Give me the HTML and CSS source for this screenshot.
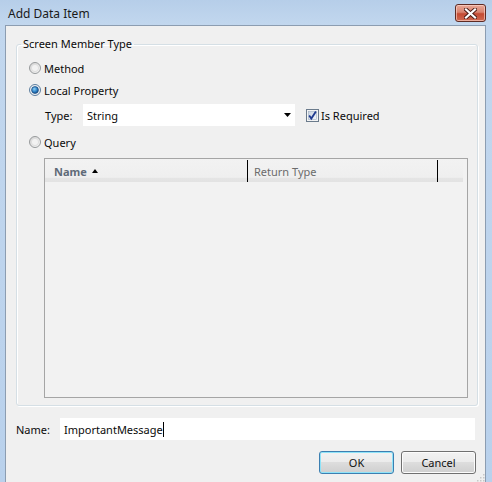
FILE: index.html
```html
<!DOCTYPE html>
<html>
<head>
<meta charset="utf-8">
<title>Add Data Item</title>
<link rel="stylesheet" href="styles.css">
</head>
<body>
<div class="window">
  <div class="titlebar">
    <span class="title">Add Data Item</span>
    <span class="close">
      <svg width="13" height="11" viewBox="0 0 13 11">
        <path d="M2 1.5 L11 9.5 M11 1.5 L2 9.5" stroke="#4a1a14" stroke-width="4" stroke-linecap="square"/>
        <path d="M2 1.5 L11 9.5 M11 1.5 L2 9.5" stroke="#ffffff" stroke-width="2.2" stroke-linecap="square"/>
      </svg>
    </span>
  </div>
  <div class="client">
    <fieldset class="group">
      <legend>Screen Member Type</legend>
      <div class="row first">
        <svg class="radio" width="12" height="12" viewBox="0 0 12 12">
          <defs>
            <linearGradient id="rg" x1="0" y1="0" x2="1" y2="1">
              <stop offset="0" stop-color="#d0d0d0"/>
              <stop offset="1" stop-color="#fbfbfb"/>
            </linearGradient>
          </defs>
          <circle cx="6" cy="6" r="5.5" fill="url(#rg)" stroke="#979a9c"/>
          <circle cx="6" cy="6" r="3.6" fill="#f2f2f2" stroke="#dadada" stroke-width="0.8"/>
        </svg>
        <span>Method</span>
      </div>
      <div class="row">
        <svg class="radio" width="12" height="12" viewBox="0 0 12 12">
          <defs>
            <radialGradient id="dot" cx="0.4" cy="0.35" r="0.7">
              <stop offset="0" stop-color="#8fd2f7"/>
              <stop offset="0.6" stop-color="#2a7fc4"/>
              <stop offset="1" stop-color="#16477c"/>
            </radialGradient>
          </defs>
          <circle cx="6" cy="6" r="5.5" fill="#eef0f2" stroke="#5e7f9f"/>
          <circle cx="6" cy="6" r="3.4" fill="url(#dot)" stroke="#1f4f86" stroke-width="0.8"/>
        </svg>
        <span>Local Property</span>
      </div>
      <div class="type-row">
        <span class="type-label">Type:</span>
        <div class="combo">
          <span>String</span>
          <svg width="7" height="4" viewBox="0 0 7 4"><path d="M0 0 H7 L3.5 4 Z" fill="#000"/></svg>
        </div>
        <svg class="checkbox" width="13" height="13" viewBox="0 0 13 13">
          <defs>
            <linearGradient id="cb" x1="0" y1="0" x2="1" y2="1">
              <stop offset="0" stop-color="#c9d3e0"/>
              <stop offset="1" stop-color="#f4f7fb"/>
            </linearGradient>
          </defs>
          <rect x="0.5" y="0.5" width="12" height="12" fill="#f4f4f4" stroke="#6b7b8c"/>
          <rect x="2.5" y="2.5" width="8" height="8" fill="url(#cb)" stroke="#9fb0c4" stroke-width="0.6"/>
          <path d="M3.2 6.6 L5.3 9.6 L9.9 2.6" fill="none" stroke="#1f3a8f" stroke-width="1.8"/>
        </svg>
        <span class="check-label">Is Required</span>
      </div>
      <div class="row query">
        <svg class="radio" width="12" height="12" viewBox="0 0 12 12">
          <circle cx="6" cy="6" r="5.5" fill="url(#rg)" stroke="#979a9c"/>
          <circle cx="6" cy="6" r="3.6" fill="#f2f2f2" stroke="#dadada" stroke-width="0.8"/>
        </svg>
        <span>Query</span>
      </div>
      <div class="list">
        <div class="list-header">
          <div class="col col-name">Name<svg class="sort" width="6" height="4" viewBox="0 0 6 4"><path d="M0 4 H6 L3 0 Z" fill="#000"/></svg></div>
          <div class="col col-type">Return Type</div>
          <div class="col col-rest"></div>
        </div>
      </div>
    </fieldset>
    <div class="name-row">
      <span class="name-label">Name:</span>
      <div class="name-input"><span>ImportantMessage</span><span class="caret"></span></div>
    </div>
    <div class="buttons">
      <button class="btn default">OK</button>
      <button class="btn">Cancel</button>
    </div>
    <svg class="grip" width="8" height="8" viewBox="0 0 8 8">
      <g fill="#c8c8c8">
        <rect x="6" y="0" width="1.5" height="1.5"/>
        <rect x="3" y="3" width="1.5" height="1.5"/>
        <rect x="6" y="3" width="1.5" height="1.5"/>
        <rect x="0" y="6" width="1.5" height="1.5"/>
        <rect x="3" y="6" width="1.5" height="1.5"/>
        <rect x="6" y="6" width="1.5" height="1.5"/>
      </g>
    </svg>
  </div>
</div>
</body>
</html>
```
FILE: styles.css
```css
* { box-sizing: border-box; }
html, body { margin: 0; padding: 0; }
body {
  width: 492px;
  height: 482px;
  overflow: hidden;
  background: linear-gradient(to bottom, #b6cee9 0, #c2d7ee 25px, #b9d1ec 100%);
  font-family: "Noto Sans", "Open Sans", sans-serif;
  font-size: 11px;
  color: #0a0a0a;
}
.window {
  display: flex;
  flex-direction: column;
  height: 482px;
  padding: 0 6px 0 5px;
}
.titlebar {
  height: 25px;
  flex: none;
  display: flex;
  align-items: flex-start;
  justify-content: space-between;
  padding-left: 3px;
}
.title {
  margin-top: 6px;
  line-height: 16px;
  font-size: 12px;
  color: #1a1a1a;
}
.close {
  margin-top: 4px;
  width: 31px;
  height: 18px;
  border: 1px solid #5e2b24;
  border-radius: 3px;
  background: linear-gradient(to bottom, #e9a898 0, #d88470 45%, #c44a32 55%, #cf6a52 100%);
  box-shadow: inset 0 0 0 1px rgba(255, 220, 210, 0.6);
  display: flex;
  align-items: center;
  justify-content: center;
}
.client {
  position: relative;
  flex: 1;
  display: flex;
  flex-direction: column;
  background: #f0f0f0;
  border: 1px solid #8c9db1;
  border-bottom: none;
}
.group {
  margin: 10px 7px 0 10px;
  padding: 0 0 7px 0;
  border: 1px solid #d5dfe5;
  border-radius: 3px;
  box-shadow: inset 1px 1px 0 #fff, 1px 1px 0 #fff;
  min-width: 0;
}
.group legend {
  margin-left: 4px;
  padding: 0 2px;
  line-height: 16px;
  font-size: 11px;
}
.row {
  height: 22px;
  display: flex;
  align-items: center;
  padding-left: 12px;
}
.row.first { margin-top: 5px; }
.row.query { margin-top: 5px; }
.radio { margin-right: 3px; flex: none; }
.type-row {
  margin-top: 3px;
  height: 22px;
  display: flex;
  align-items: center;
  padding-left: 28px;
}
.type-label { width: 38px; }
.combo {
  width: 212px;
  height: 22px;
  background: #fff;
  display: flex;
  align-items: center;
  justify-content: space-between;
  padding: 0 4px 0 4px;
}
.checkbox { margin-left: 11px; margin-right: 2px; flex: none; }
.list {
  margin: 5px 0 0 27px;
  width: 424px;
  height: 240px;
  border: 1px solid #a5a5a5;
  background: #f2f2f2;
}
.list-header {
  width: 418px;
  height: 23px;
  display: flex;
  background: linear-gradient(to bottom, #f2f2f2 0, #efefef 80%, #e5e5e5 82%, #e3e3e3 100%);
}
.col {
  height: 22px;
  margin-top: 1px;
  display: flex;
  align-items: center;
}
.col-name {
  width: 203px;
  padding-left: 9px;
  border-right: 1px solid #000;
  font-weight: bold;
  color: #5f6a78;
}
.sort {
  margin-left: 5px;
  margin-bottom: 1px;
}
.col-type {
  width: 190px;
  padding-left: 6px;
  border-right: 1px solid #000;
  color: #6b6b6b;
}
.col-rest { flex: 1; }
.name-row {
  margin-top: 12px;
  height: 22px;
  display: flex;
  align-items: center;
  padding: 0 10px 0 10px;
}
.name-label { width: 44px; }
.name-input {
  flex: 1;
  height: 22px;
  background: #fff;
  display: flex;
  align-items: center;
  padding-left: 4px;
}
.caret {
  width: 1px;
  height: 15px;
  background: #000;
}
.buttons {
  margin-top: 11px;
  display: flex;
  justify-content: flex-end;
  gap: 7px;
  padding-right: 9px;
}
.btn {
  width: 75px;
  height: 23px;
  font-family: inherit;
  font-size: 11px;
  color: #111;
  border: 1px solid #707070;
  border-radius: 3px;
  background: linear-gradient(to bottom, #f2f2f2 0, #ebebeb 50%, #dddddd 50%, #cfcfcf 100%);
  box-shadow: inset 0 0 0 1px #fcfcfc;
  padding: 0;
}
.btn.default {
  border-color: #3c7fb1;
  box-shadow: inset 0 0 0 1px #8fe3f8;
}
.grip {
  position: absolute;
  right: 0;
  bottom: 0;
}
```
